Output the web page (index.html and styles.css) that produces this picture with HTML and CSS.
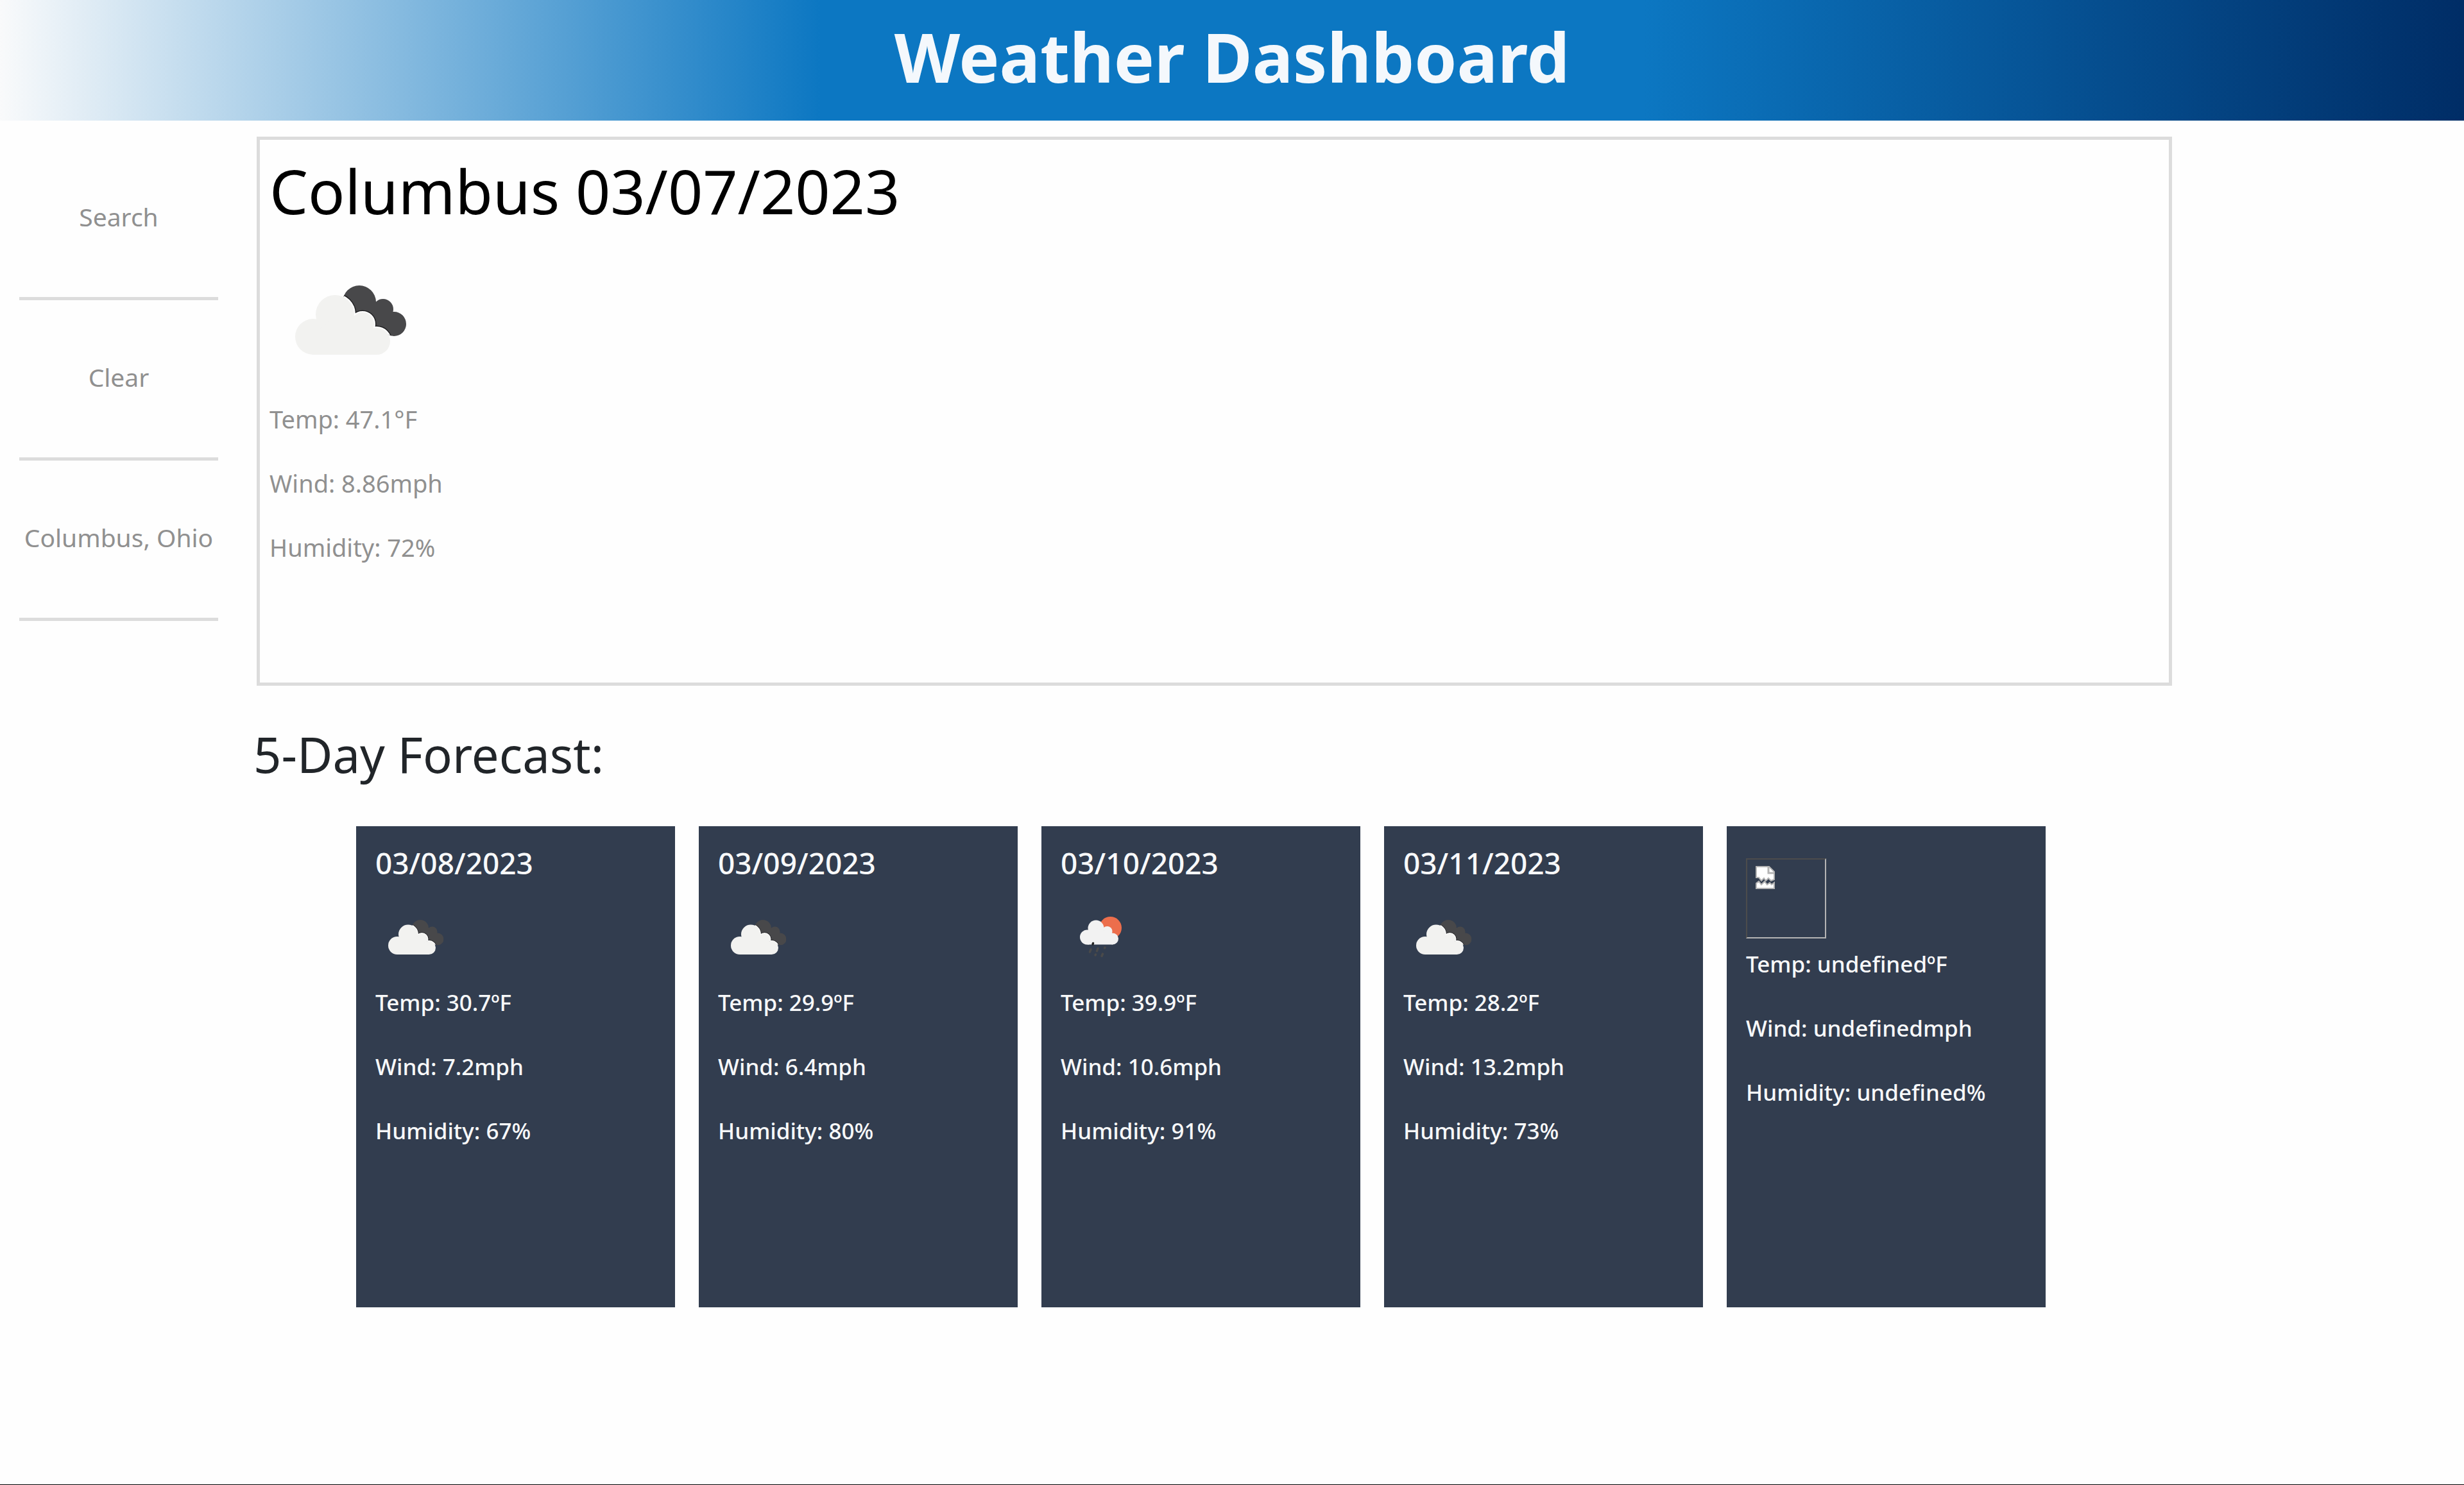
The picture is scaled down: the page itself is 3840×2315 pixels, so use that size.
FILE: index.html
```html
<!DOCTYPE html>
<html lang="en">
<head>
<meta charset="utf-8">
<meta name="viewport" content="width=device-width, initial-scale=1">
<title>Weather Dashboard</title>
<link rel="stylesheet" href="styles.css">
</head>
<body>
<svg class="defs" aria-hidden="true">
  <defs>
    <clipPath id="back-clip">
      <circle cx="140" cy="98" r="26"/><circle cx="177" cy="109" r="16"/><circle cx="194" cy="132" r="19"/>
      <path d="M140 98 177 109 194 132 190 150 140 130z"/>
    </clipPath>
    <g id="front-cloud">
      <circle cx="68" cy="152" r="28"/><circle cx="102" cy="117" r="30"/><circle cx="145" cy="132" r="18"/><circle cx="167" cy="159" r="21"/>
      <path d="M68 180H167V159L145 132 102 117 68 152z"/>
    </g>
    <symbol id="broken-clouds" viewBox="0 0 250 250">
      <g clip-path="url(#back-clip)">
        <rect width="250" height="250" fill="#48484a"/>
        <use href="#front-cloud" fill="#222224" stroke="#222224" stroke-width="7"/>
        <use href="#front-cloud" fill="#fff" stroke="#fff" stroke-width="4"/>
      </g>
      <use href="#front-cloud" fill="#f2f2f0"/>
    </symbol>
    <symbol id="sun-rain" viewBox="0 0 250 250">
      <circle cx="155" cy="97" r="35" fill="#ec6e4c"/>
      <g fill="#f2f2f2">
        <circle cx="83" cy="126" r="23"/><circle cx="110" cy="98" r="25"/><circle cx="145" cy="108" r="16"/><circle cx="162" cy="131" r="18"/>
        <path d="M83 149H162V131L145 108 110 98 83 126z"/>
      </g>
      <path d="M101 145l-1 3" stroke="#222" stroke-width="7" stroke-linecap="round"/>
      <path d="M94 164l-3 8M116 161l-3 8M138 158l-1 2M109 180l-1 2M131 178l-3 7" stroke="#4a4a4a" stroke-width="7" stroke-linecap="round"/>
    </symbol>
  </defs>
</svg>

<header class="banner"><h1 class="banner-title">Weather Dashboard</h1></header>

<div class="layout">
  <nav class="sidebar" aria-label="Locations">
    <button class="side-button" type="button">Search</button>
    <button class="side-button" type="button">Clear</button>
    <button class="side-button" type="button">Columbus, Ohio</button>
  </nav>
  <main class="main">
    <section class="today">
      <h2 class="today-title">Columbus 03/07/2023</h2>
      <svg class="today-icon" role="img" aria-label="Broken clouds"><use href="#broken-clouds"/></svg>
      <p class="stat">Temp: 47.1°F</p>
      <p class="stat">Wind: 8.86mph</p>
      <p class="stat">Humidity: 72%</p>
    </section>
    <h2 class="forecast-title">5-Day Forecast:</h2>
    <section class="forecast">
      <article class="card">
        <h3 class="card-date">03/08/2023</h3>
        <svg class="card-icon" role="img" aria-label="Broken clouds"><use href="#broken-clouds"/></svg>
        <p class="stat">Temp: 30.7ºF</p>
        <p class="stat">Wind: 7.2mph</p>
        <p class="stat">Humidity: 67%</p>
      </article>
      <article class="card">
        <h3 class="card-date">03/09/2023</h3>
        <svg class="card-icon" role="img" aria-label="Broken clouds"><use href="#broken-clouds"/></svg>
        <p class="stat">Temp: 29.9ºF</p>
        <p class="stat">Wind: 6.4mph</p>
        <p class="stat">Humidity: 80%</p>
      </article>
      <article class="card">
        <h3 class="card-date">03/10/2023</h3>
        <svg class="card-icon" role="img" aria-label="Rain"><use href="#sun-rain"/></svg>
        <p class="stat">Temp: 39.9ºF</p>
        <p class="stat">Wind: 10.6mph</p>
        <p class="stat">Humidity: 91%</p>
      </article>
      <article class="card">
        <h3 class="card-date">03/11/2023</h3>
        <svg class="card-icon" role="img" aria-label="Broken clouds"><use href="#broken-clouds"/></svg>
        <p class="stat">Temp: 28.2ºF</p>
        <p class="stat">Wind: 13.2mph</p>
        <p class="stat">Humidity: 73%</p>
      </article>
      <article class="card">
        <h3 class="card-date"></h3>
        <svg class="card-icon card-icon-missing" viewBox="0 0 121 121" role="img" aria-label="Missing icon">
          <g fill="#fff" stroke="#b4b4b4" stroke-width="2">
            <path d="M14 11H34L42 19V31L37 33 33 29 29 33 26 29 22 33 18 28H14z"/>
            <path d="M33 11V21H42" fill="none" stroke-width="3"/>
            <path d="M14 45V37L18 34 22 39 27 34 31 39 35 36 38 39 42 36V45z"/>
          </g>
        </svg>
        <p class="stat">Temp: undefinedºF</p>
        <p class="stat">Wind: undefinedmph</p>
        <p class="stat">Humidity: undefined%</p>
      </article>
    </section>
  </main>
</div>
</body>
</html>
```
FILE: styles.css
```css
* {
  box-sizing: border-box;
}

body {
  margin: 0;
  min-height: 100vh;
  border-bottom: 1px solid #000;
  background: #fefefe;
  color: #212529;
  font-family: "Noto Sans", "Open Sans", sans-serif;
}

h1,
h2,
h3,
p {
  margin: 0;
  font-weight: 400;
}

.defs {
  position: absolute;
  width: 0;
  height: 0;
}

.banner {
  padding-bottom: 12px;
  background: linear-gradient(to right, #f9fafb, #0c77c2 33.3%, #0c77c2 66.7%, #002d66);
}

.banner-title {
  color: #f4f8fc;
  font-size: 106px;
  font-weight: 700;
  line-height: 176px;
  text-align: center;
}

.layout {
  display: flex;
}

.sidebar {
  display: flex;
  flex-direction: column;
  width: 310px;
  margin: 30px 55px 0 30px;
}

.side-button {
  height: 250px;
  padding: 0 0 6px;
  border: 0;
  border-bottom: 5px solid #dcdcdc;
  background: none;
  color: #909090;
  font: inherit;
  font-size: 39px;
}

.main {
  flex: 1;
  margin: 25px 455px 0 0;
}

.today {
  margin-left: 5px;
  padding: 19px 15px 141px;
  border: 5px solid #dcdcdc;
  color: #909090;
  font-size: 38px;
}

.today-title {
  margin-bottom: 16px;
  color: #000;
  font-size: 95px;
  line-height: 120px;
}

.today-icon {
  display: block;
  width: 250px;
  height: 250px;
}

.stat {
  margin-bottom: 40px;
  font-weight: inherit;
  line-height: 60px;
}

.forecast-title {
  margin: 59px 0 64px;
  font-size: 76px;
  line-height: 96px;
}

.forecast {
  display: grid;
  grid-template-columns: repeat(5, 1fr);
  gap: 37px;
  margin: 0 197px 0 160px;
}

.card {
  min-height: 750px;
  padding: 27px 30px;
  background: #323d4f;
  color: #f8f9fa;
  font-size: 35px;
  font-weight: 500;
}

.card-date {
  margin-bottom: 23px;
  font-size: 46px;
  font-weight: 500;
  line-height: 60px;
}

.card-icon {
  display: block;
  width: 125px;
  height: 125px;
  margin-bottom: 10px;
}

.card-icon-missing {
  border: 2px solid;
  border-color: #4c4c4c #b4b4b4 #b4b4b4 #4c4c4c;
}
```
